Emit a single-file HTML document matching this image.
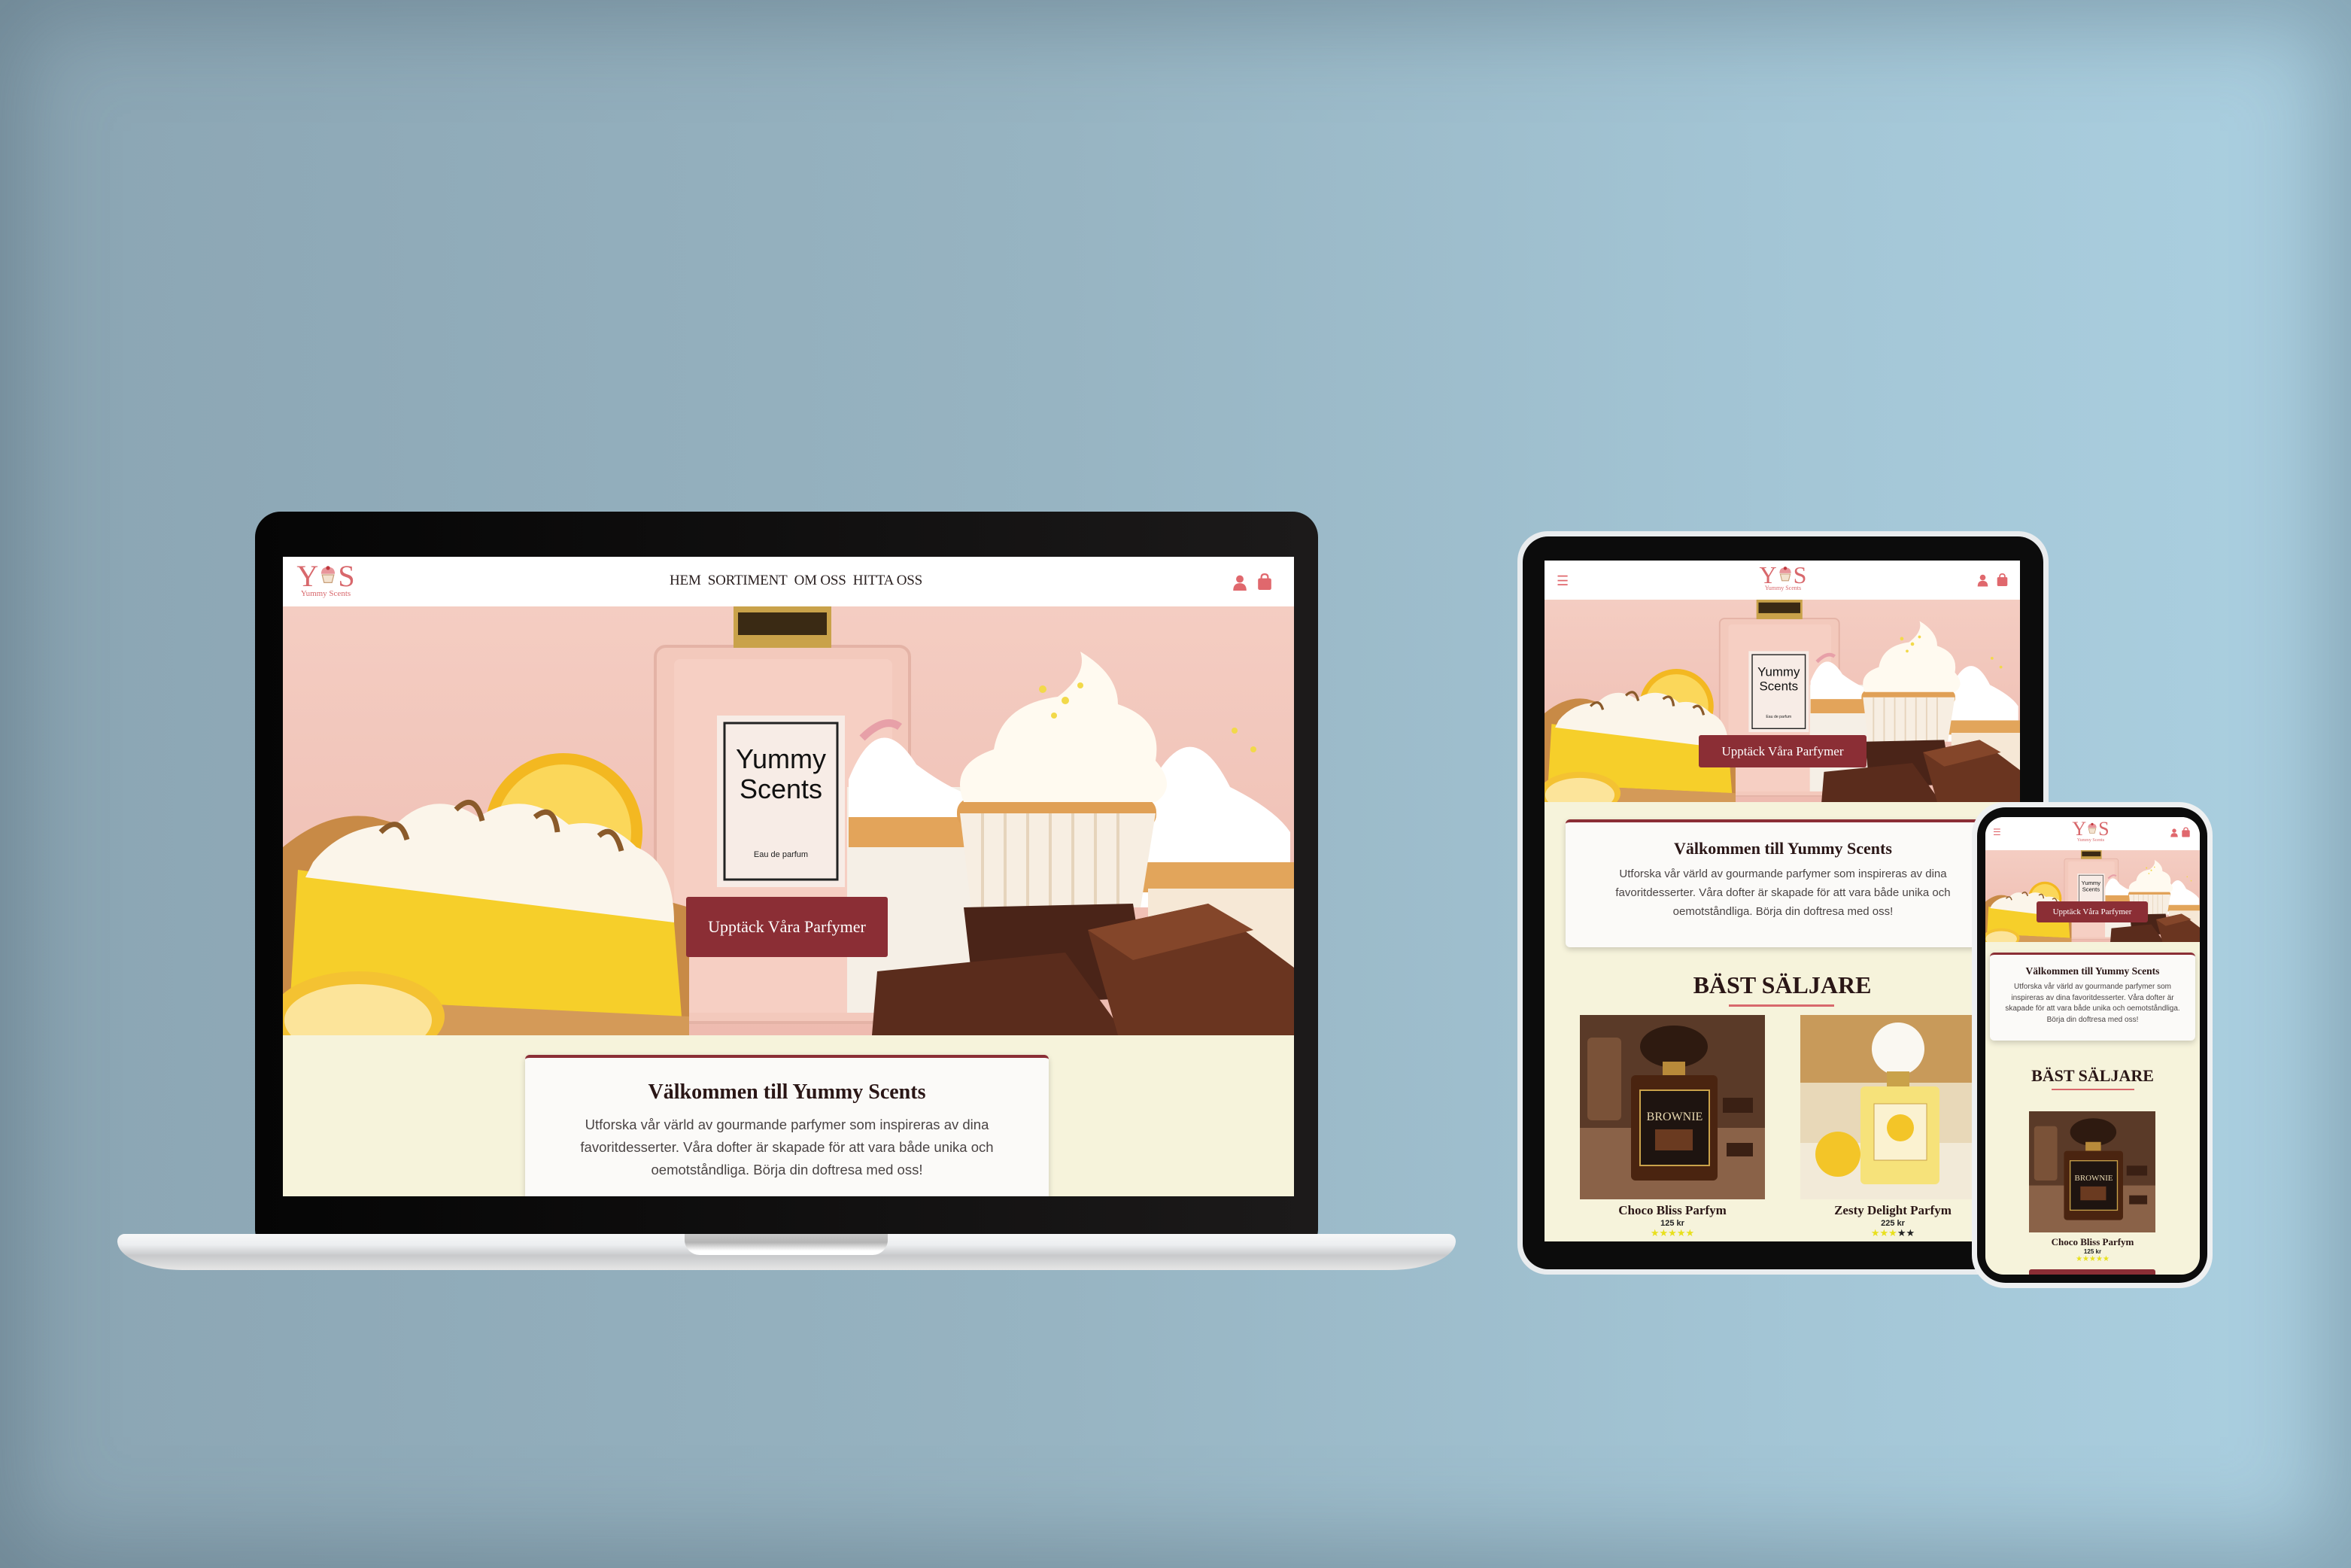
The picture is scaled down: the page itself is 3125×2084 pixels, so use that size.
<!DOCTYPE html>
<html><head><meta charset="utf-8">
<style>
*{margin:0;padding:0;box-sizing:border-box}
body{width:3125px;height:2084px;overflow:hidden;position:relative;font-family:"Liberation Sans",sans-serif;
background:linear-gradient(90deg,#8ba5b3 0%,#97b4c2 45%,#a3c5d5 75%,#abd0e1 100%)}
.vig{position:absolute;inset:0;box-shadow:inset 0 0 120px 30px rgba(60,80,95,.35)}
.abs{position:absolute}
.serif{font-family:"Liberation Serif",serif}
.scr{position:absolute;overflow:hidden;background:#f6f3db}
.nav{position:absolute;left:0;top:0;width:100%;background:#fff}
.logo{position:absolute;color:#d8686c;font-family:"Liberation Serif",serif;text-align:center;line-height:1}
.card{position:absolute;background:#fbfaf8;border-top:4px solid #8b2e35;border-radius:6px;box-shadow:0 3px 8px rgba(0,0,0,.18);text-align:center}
.card h2{font-family:"Liberation Serif",serif;font-weight:bold;color:#2a1616}
.card p{color:#4a4444}
.btn{position:absolute;background:#8b2e35;color:#fff;font-family:"Liberation Serif",serif;text-align:center;border-radius:3px}
.hd{position:absolute;font-family:"Liberation Serif",serif;font-weight:bold;color:#2a1616;text-align:center}
.stars{position:absolute;color:#e8e01c;text-align:center}
</style></head><body>
<svg width="0" height="0" style="position:absolute">
<defs>
<linearGradient id="bg" x1="0" y1="0" x2="0" y2="1"><stop offset="0" stop-color="#f4cdc2"/><stop offset="1" stop-color="#eebbb0"/></linearGradient>
<symbol id="hero" viewBox="0 0 1344 570" preserveAspectRatio="none">
<rect width="1344" height="570" fill="url(#bg)"/>
<rect x="495" y="53" width="338" height="500" rx="14" fill="#f3c9bc" stroke="#e4b3a6" stroke-width="4"/>
<rect x="520" y="70" width="290" height="470" rx="8" fill="#f6d2c6" opacity=".7"/>
<rect x="599" y="0" width="130" height="55" fill="#c9a24a"/>
<rect x="605" y="8" width="118" height="30" fill="#3a2a14"/>
<rect x="577" y="145" width="170" height="228" fill="#f7ece6"/>
<rect x="587" y="155" width="150" height="208" fill="none" stroke="#222" stroke-width="3"/>
<text x="662" y="215" font-family="Liberation Sans,sans-serif" font-size="36" text-anchor="middle" fill="#111">Yummy</text>
<text x="662" y="255" font-family="Liberation Sans,sans-serif" font-size="36" text-anchor="middle" fill="#111">Scents</text>
<text x="662" y="333" font-family="Liberation Sans,sans-serif" font-size="11" text-anchor="middle" fill="#222">Eau de parfum</text>
<circle cx="373" cy="300" r="105" fill="#f3b821"/>
<circle cx="373" cy="300" r="90" fill="#fbd75a"/>
<circle cx="373" cy="300" r="12" fill="#fff3c4"/>
<path d="M0 320 Q60 270 120 280 L540 400 L540 570 L0 570Z" fill="#c88a46"/>
<path d="M20 350 L520 420 L530 545 L10 520Z" fill="#f6cf2a"/>
<path d="M40 340 Q80 290 150 290 Q200 240 260 280 Q320 240 380 290 Q430 280 470 320 Q520 340 520 420 L30 360Z" fill="#fbf5ea"/>
<path d="M130 300 q25 -25 35 10 M230 270 q25 -25 35 15 M335 280 q25 -20 30 20 M420 305 q20 -18 30 20" stroke="#8a5a2a" stroke-width="7" fill="none"/>
<path d="M10 520 L540 545 L540 570 L0 570Z" fill="#d49a58"/>
<ellipse cx="100" cy="545" rx="115" ry="60" fill="#f4c232"/>
<ellipse cx="100" cy="550" rx="98" ry="48" fill="#fce49a"/>
<rect x="750" y="240" width="165" height="300" fill="#f5efe6"/>
<path d="M752 230 q40 -100 90 -20 q40 30 70 40 v60 h-160z" fill="#fff"/>
<path d="M770 175 q30 -30 50 -15" stroke="#e7a0a8" stroke-width="10" fill="none"/>
<rect x="752" y="280" width="160" height="40" fill="#e3a45a"/>
<path d="M1139 270 q60 -150 120 -30 q60 30 80 60 v100 h-200z" fill="#fff"/>
<rect x="1140" y="340" width="204" height="40" fill="#e2a55b"/>
<rect x="1150" y="375" width="194" height="150" fill="#f6e8d6"/>
<rect x="896" y="255" width="265" height="40" rx="18" fill="#e0a056"/>
<path d="M900 275 L1160 275 L1140 400 L915 400Z" fill="#f7eee2"/>
<path d="M930 275 v125 M960 275 v125 M990 275 v125 M1020 275 v125 M1050 275 v125 M1080 275 v125 M1110 275 v125" stroke="#e6d4bc" stroke-width="4"/>
<path d="M905 260 q-20 -50 40 -70 q10 -60 85 -70 q40 -30 30 -60 q50 30 50 70 q60 20 50 75 q30 35 0 55z" fill="#fffaf0"/>
<g fill="#f2d94a"><circle cx="1010" cy="110" r="5"/><circle cx="1040" cy="125" r="5"/><circle cx="1060" cy="105" r="4"/><circle cx="1025" cy="145" r="4"/><circle cx="1265" cy="165" r="4"/><circle cx="1290" cy="190" r="4"/></g>
<path d="M905 400 L1130 395 L1150 520 L920 530Z" fill="#4a2418"/>
<path d="M790 485 L1040 460 L1120 570 L783 570Z" fill="#5a2c1c"/>
<path d="M1070 430 L1230 395 L1344 480 L1344 570 L1110 570Z" fill="#6a3520"/>
<path d="M1070 430 L1230 395 L1290 430 L1130 470Z" fill="#84462a"/>
</symbol>
<symbol id="brownie" viewBox="0 0 246 245" preserveAspectRatio="none">
<rect width="246" height="245" fill="#5a3a28"/>
<rect y="150" width="246" height="95" fill="#8a6248"/>
<rect x="10" y="30" width="45" height="110" rx="6" fill="#7a5238"/>
<ellipse cx="125" cy="42" rx="45" ry="28" fill="#2e1a10"/>
<rect x="110" y="62" width="30" height="18" fill="#b88a3a"/>
<rect x="68" y="80" width="115" height="140" rx="6" fill="#4a2410"/>
<rect x="80" y="100" width="92" height="100" fill="#1e1410" stroke="#c9a24a" stroke-width="2"/>
<text x="126" y="140" font-family="Liberation Serif,serif" font-size="16" fill="#e8d8b0" text-anchor="middle">BROWNIE</text>
<rect x="100" y="152" width="50" height="28" fill="#6a3a20"/>
<rect x="190" y="110" width="40" height="20" fill="#3a2014"/><rect x="195" y="170" width="35" height="18" fill="#3a2014"/>
</symbol>
<symbol id="zesty" viewBox="0 0 246 245" preserveAspectRatio="none">
<rect width="246" height="245" fill="#e8d8b8"/>
<rect width="246" height="90" fill="#c89a5a"/>
<rect y="170" width="246" height="75" fill="#f2ead8"/>
<circle cx="50" cy="185" r="30" fill="#f3c528"/>
<ellipse cx="130" cy="45" rx="35" ry="35" fill="#faf8f2"/>
<rect x="115" y="75" width="30" height="22" fill="#c9a24a"/>
<rect x="80" y="95" width="105" height="130" rx="6" fill="#f6e27a"/>
<rect x="98" y="118" width="70" height="75" fill="#fbf2d0" stroke="#c9a24a"/>
<circle cx="133" cy="150" r="18" fill="#f3c528"/>
</symbol>
<symbol id="cup" viewBox="0 0 20 20"><path d="M3 9 Q3 2 10 2 Q17 2 17 9Z" fill="#e8959a"/><circle cx="10" cy="3" r="2" fill="#c0383e"/><path d="M4 10 H16 L14 18 H6Z" fill="#f3e2cf" stroke="#c8a07a"/></symbol>
<symbol id="user" viewBox="0 0 20 20"><circle cx="10" cy="6" r="4.5" fill="#e0686d"/><path d="M2 20 Q2 11 10 11 Q18 11 18 20Z" fill="#e0686d"/></symbol>
<symbol id="bag" viewBox="0 0 20 20"><path d="M6 7 V5 Q6 1 10 1 Q14 1 14 5 V7" stroke="#e0686d" stroke-width="2" fill="none"/><rect x="2" y="6" width="16" height="14" rx="2" fill="#e0686d"/></symbol>
</defs></svg>

<div class="abs" style="left:339px;top:680px;width:1413px;height:975px;background:linear-gradient(90deg,#050505,#1c1a1a);border-radius:34px 34px 20px 20px"></div>
<div class="abs" style="left:156px;top:1640px;width:1779px;height:48px;background:linear-gradient(#f6f7f8 0%,#eceef0 30%,#c8c9cb 60%,#e6e6e6 100%);border-radius:10px 10px 90px 90px/10px 10px 40px 40px"></div>
<div class="abs" style="left:910px;top:1640px;width:270px;height:28px;background:linear-gradient(#c9c9c9,#b4b4b4 40%,#fff 80%);border-radius:0 0 20px 20px"></div>
<div class="scr" style="left:376px;top:740px;width:1344px;height:850px">
 <div class="nav" style="height:66px">
  <div class="logo" style="left:16px;top:6px;width:82px"><span style="font-size:40px">Y</span><svg width="26" height="26" style="vertical-align:2px"><use href="#cup"/></svg><span style="font-size:40px">S</span><div style="font-size:11px;margin-top:-2px">Yummy Scents</div></div>
  <div class="abs serif" style="left:480px;width:404px;top:21px;font-size:19px;color:#2a2020;text-align:center;letter-spacing:-.2px">HEM&nbsp;&nbsp;SORTIMENT&nbsp;&nbsp;OM OSS&nbsp;&nbsp;HITTA OSS</div>
  <svg class="abs" style="left:1261px;top:22px" width="22" height="24"><use href="#user"/></svg>
  <svg class="abs" style="left:1294px;top:20px" width="22" height="26"><use href="#bag"/></svg>
 </div>
 <svg class="abs" style="left:0;top:66px" width="1344" height="570"><use href="#hero"/></svg>
 <div class="btn" style="left:536px;top:452px;width:268px;height:80px;line-height:80px;font-size:22px">Upptäck Våra Parfymer</div>
 <div class="card" style="left:322px;top:662px;width:696px;height:220px">
  <h2 style="font-size:28px;margin-top:30px">Välkommen till Yummy Scents</h2>
  <p style="font-size:18.5px;line-height:30px;margin-top:12px;padding:0 30px">Utforska vår värld av gourmande parfymer som inspireras av dina favoritdesserter. Våra dofter är skapade för att vara både unika och oemotståndliga. Börja din doftresa med oss!</p>
 </div>
</div>

<div class="abs" style="left:2017px;top:706px;width:706px;height:988px;background:#e9ecee;border-radius:40px"></div>
<div class="abs" style="left:2024px;top:713px;width:692px;height:974px;background:#0c0c0c;border-radius:34px"></div>
<div class="scr" style="left:2053px;top:745px;width:632px;height:905px">
 <div class="nav" style="height:52px">
  <div class="abs" style="left:16px;top:18px;color:#e0686d;font-size:18px;line-height:1">&#9776;</div>
  <div class="logo" style="left:272px;top:3px;width:90px"><span style="font-size:32px">Y</span><svg width="22" height="22" style="vertical-align:1px"><use href="#cup"/></svg><span style="font-size:32px">S</span><div style="font-size:8px;margin-top:-2px">Yummy Scents</div></div>
  <svg class="abs" style="left:574px;top:17px" width="17" height="18"><use href="#user"/></svg>
  <svg class="abs" style="left:600px;top:16px" width="17" height="19"><use href="#bag"/></svg>
 </div>
 <svg class="abs" style="left:0;top:52px" width="632" height="269"><use href="#hero"/></svg>
 <div class="btn" style="left:205px;top:232px;width:223px;height:43px;line-height:43px;font-size:17px">Upptäck Våra Parfymer</div>
 <div class="card" style="left:28px;top:344px;width:578px;height:170px">
  <h2 style="font-size:22px;margin-top:22px">Välkommen till Yummy Scents</h2>
  <p style="font-size:15px;line-height:25px;margin-top:8px;padding:0 30px">Utforska vår värld av gourmande parfymer som inspireras av dina favoritdesserter. Våra dofter är skapade för att vara både unika och oemotståndliga. Börja din doftresa med oss!</p>
 </div>
 <div class="hd" style="left:0;width:632px;top:546px;font-size:32px">BÄST SÄLJARE</div>
 <div class="abs" style="left:245px;top:590px;width:140px;height:3px;background:#d8686c"></div>
 <svg class="abs" style="left:47px;top:604px" width="246" height="245"><use href="#brownie"/></svg>
 <svg class="abs" style="left:340px;top:604px" width="246" height="245"><use href="#zesty"/></svg>
 <div class="hd" style="left:47px;width:246px;top:854px;font-size:17px">Choco Bliss Parfym</div>
 <div class="hd" style="left:340px;width:246px;top:854px;font-size:17px">Zesty Delight Parfym</div>
 <div class="abs" style="left:47px;width:246px;top:875px;font-size:11px;font-weight:bold;text-align:center;color:#222">125 kr</div>
 <div class="abs" style="left:340px;width:246px;top:875px;font-size:11px;font-weight:bold;text-align:center;color:#222">225 kr</div>
 <div class="stars" style="left:47px;width:246px;top:886px;font-size:13px">★★★★★</div>
 <div class="stars" style="left:340px;width:246px;top:886px;font-size:13px">★★★<span style="color:#222">★★</span></div>
</div>

<div class="abs" style="left:2621px;top:1066px;width:320px;height:646px;background:#eef0f1;border-radius:44px"></div>
<div class="abs" style="left:2628px;top:1073px;width:306px;height:632px;background:#0c0c0c;border-radius:38px"></div>
<div class="scr" style="left:2639px;top:1086px;width:285px;height:608px;border-radius:24px">
 <div class="nav" style="height:44px">
  <div class="abs" style="left:10px;top:14px;color:#e0686d;font-size:12px;line-height:1">&#9776;</div>
  <div class="logo" style="left:100px;top:3px;width:80px"><span style="font-size:26px">Y</span><svg width="16" height="16" style="vertical-align:1px"><use href="#cup"/></svg><span style="font-size:26px">S</span><div style="font-size:6px;margin-top:-1px">Yummy Scents</div></div>
  <svg class="abs" style="left:245px;top:14px" width="12" height="13"><use href="#user"/></svg>
  <svg class="abs" style="left:260px;top:13px" width="13" height="14"><use href="#bag"/></svg>
 </div>
 <svg class="abs" style="left:0;top:44px" width="285" height="122"><use href="#hero"/></svg>
 <div class="btn" style="left:68px;top:112px;width:148px;height:28px;line-height:28px;font-size:11px">Upptäck Våra Parfymer</div>
 <div class="card" style="left:6px;top:180px;width:273px;height:117px;border-top-width:3px">
  <h2 style="font-size:13.5px;margin-top:14px">Välkommen till Yummy Scents</h2>
  <p style="font-size:10px;line-height:14.5px;margin-top:6px;padding:0 14px">Utforska vår värld av gourmande parfymer som inspireras av dina favoritdesserter. Våra dofter är skapade för att vara både unika och oemotståndliga. Börja din doftresa med oss!</p>
 </div>
 <div class="hd" style="left:0;width:285px;top:331px;font-size:22px">BÄST SÄLJARE</div>
 <div class="abs" style="left:88px;top:361px;width:110px;height:2px;background:#d8686c"></div>
 <svg class="abs" style="left:58px;top:391px" width="168" height="161"><use href="#brownie"/></svg>
 <div class="hd" style="left:0;width:285px;top:557px;font-size:13px">Choco Bliss Parfym</div>
 <div class="abs" style="left:0;width:285px;top:573px;font-size:8px;font-weight:bold;text-align:center;color:#222">125 kr</div>
 <div class="stars" style="left:0;width:285px;top:582px;font-size:10px">★★★★★</div>
 <div class="abs" style="left:58px;top:601px;width:168px;height:10px;background:#8b2e35;border-radius:3px"></div>
</div>
<div class="vig"></div>
</body></html>
